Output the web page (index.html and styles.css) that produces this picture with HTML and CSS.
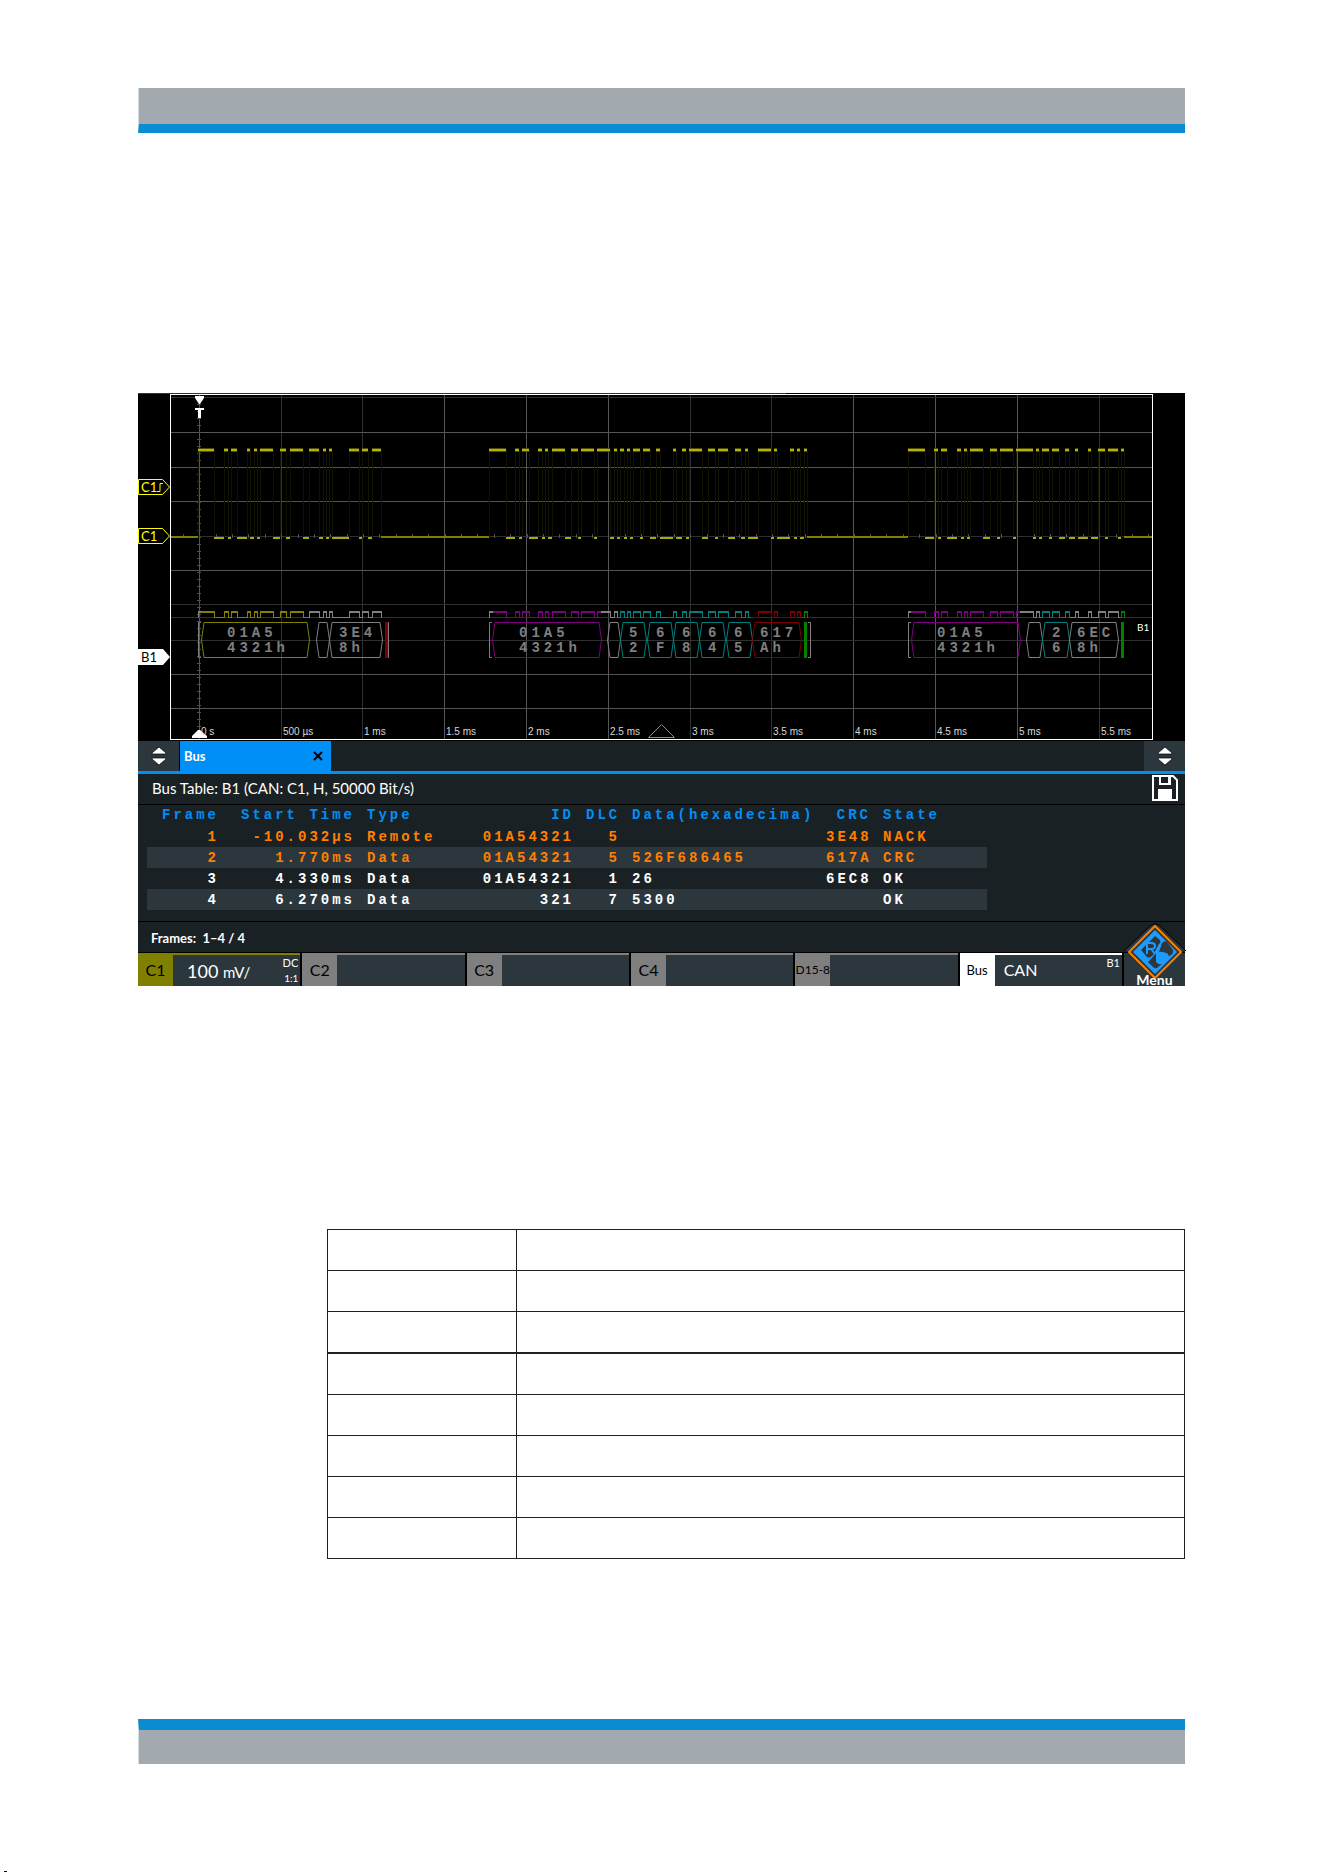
FILE: index.html
```html
<!DOCTYPE html>
<html lang="en">
<head>
<meta charset="utf-8">
<title>CAN bus table</title>
<link rel="stylesheet" href="styles.css">
</head>
<body>
<div class="page">
  <header class="band band-top"></header>

  <figure class="scope">
    <svg class="screen" viewBox="0 0 1047 348" role="img" aria-label="CAN waveform with decoded frames">
      <rect width="1047" height="348" fill="#000"/>
      <path d="M0 .5H648" stroke="#2b363d"/>
      <g id="grid" shape-rendering="crispEdges" fill="none"></g>
      <g id="signal" shape-rendering="crispEdges" fill="none"></g>
      <g id="bus" fill="none"></g>
      <rect x="32.500" y="1.500" width="982" height="345" fill="none" stroke="#fff"/>
      <path d="M57 3h9v2l-4 6h-1l-4-6zM57 15h9v2h-3v8h-3v-8h-3zM54 345v-2l6-6h2l7 6v2z" fill="#fff"/>
      <path d="M510.500 344.500h26l-13-13z" fill="none" stroke="#8c8c8c"/>
      <g class="ticks" id="labels"></g>
      <path d="M.5 86.500h24l7 7.500-7 7.500H.5zM.5 135.500h24l7 7.500-7 7.500H.5z" fill="#000" stroke="#ff0"/>
      <path d="M19 98.500h3v-8h3" fill="none" stroke="#ff0"/>
      <path d="M0 256h25l7 8-7 8H0z" fill="#fff"/>
      <g class="tag">
        <text x="3" y="99" fill="#ff0">C1</text>
        <text x="3" y="148" fill="#ff0">C1</text>
        <text x="3" y="269" fill="#000">B1</text>
      </g>
      <text class="bus-tag" x="999" y="238">B1</text>
    </svg>

    <div class="tabs">
      <button class="sort" type="button" aria-label="Resize left"><svg width="16" height="20" viewBox="0 0 16 20"><path d="M8 1l7 6v1H1V7zM1 12h14v1l-7 6-7-6z" fill="#fff" stroke="#000" stroke-width=".7"/></svg></button>
      <div class="tab">
        <button class="tab-name" type="button">Bus</button>
        <button class="tab-close" type="button" aria-label="Close"><svg width="10" height="10" viewBox="0 0 10 10"><path d="M1 1l8 8M9 1L1 9" stroke="#000" stroke-width="2"/></svg></button>
      </div>
      <button class="sort sort-end" type="button" aria-label="Resize right"><svg width="16" height="20" viewBox="0 0 16 20"><path d="M8 1l7 6v1H1V7zM1 12h14v1l-7 6-7-6z" fill="#fff" stroke="#000" stroke-width=".7"/></svg></button>
    </div>

    <div class="title-row">
      <span>Bus Table: B1 (CAN: C1, H, 50000 Bit/s)</span>
      <button class="save" type="button" aria-label="Save"><svg width="26" height="26" viewBox="0 0 26 26"><path d="M1 25V1h20l4 4v20z" fill="#1a2124" stroke="#fff" stroke-width="2"/><path d="M7 1h12v9H7zM6 14h14v12H6z" fill="#fff"/><path d="M9 2h7v6H9z" fill="#1a2124"/></svg></button>
    </div>

    <div class="frames">
      <table class="decode">
        <colgroup><col class="w-frame"><col class="w-start"><col class="w-type"><col class="w-id"><col class="w-dlc"><col class="w-data"><col class="w-crc"><col class="w-state"></colgroup>
        <thead>
          <tr><th class="num">Frame</th><th class="num">Start Time</th><th>Type</th><th class="num">ID</th><th class="num">DLC</th><th>Data(hexadecima)</th><th class="num">CRC</th><th>State</th></tr>
        </thead>
        <tbody>
          <tr class="error"><td class="num">1</td><td class="num">-10.032µs</td><td>Remote</td><td class="num">01A54321</td><td class="num">5</td><td></td><td class="num">3E48</td><td>NACK</td></tr>
          <tr class="error"><td class="num">2</td><td class="num">1.770ms</td><td>Data</td><td class="num">01A54321</td><td class="num">5</td><td>526F686465</td><td class="num">617A</td><td>CRC</td></tr>
          <tr><td class="num">3</td><td class="num">4.330ms</td><td>Data</td><td class="num">01A54321</td><td class="num">1</td><td>26</td><td class="num">6EC8</td><td>OK</td></tr>
          <tr><td class="num">4</td><td class="num">6.270ms</td><td>Data</td><td class="num">321</td><td class="num">7</td><td>5300</td><td class="num"></td><td>OK</td></tr>
        </tbody>
      </table>
    </div>

    <div class="count">Frames:&nbsp; 1–4 / 4</div>

    <div class="channels">
      <button class="channel c1" type="button"><span class="name">C1</span><span class="value"><span class="scale">100 <small>mV/</small></span><span class="side"><span>DC</span><small>1:1</small></span></span></button>
      <button class="channel" type="button"><span class="name">C2</span><span class="value"></span></button>
      <button class="channel" type="button"><span class="name">C3</span><span class="value"></span></button>
      <button class="channel" type="button"><span class="name">C4</span><span class="value"></span></button>
      <button class="channel digital" type="button"><span class="name">D15-8</span><span class="value"></span></button>
      <button class="channel decoder" type="button"><span class="name">Bus</span><span class="value"><span class="scale">CAN</span><span class="side"><span>B1</span></span></span></button>
      <button class="menu" type="button">
        <svg class="logo" width="62" height="56" viewBox="0 0 62 56">
          <path d="M0 28L26 3q5-4 10 0l26 25" fill="#2b363d" stroke="#000"/>
          <path d="M31 3l26 26-26 26L5 29z" fill="#2b363d" stroke="#ff8000" stroke-width="2"/>
          <path d="M31 7l22 22-22 22L9 29z" fill="#1e9bff"/>
          <path d="M17 27l14-14 4 3q3 3 0 5l-6 11q-4 4-6 2zM38 20q3-3 5-1l6 8q1 4-4 6l-2-3-8-1zM27 36l5-6v9l6 2-5 4q-2 1-4-1l-5-5z" fill="#2b363d"/>
          <path d="M23 31V20h4q4 0 4 3t-4 3h-4m4 0l4 5M41 31q-6-3-7 1t4 3 1 5q-3 1-6-1" fill="none" stroke="#1e9bff" stroke-width="2"/>
        </svg>
        <span class="menu-name">Menu</span>
      </button>
    </div>
  </figure>

  <table class="blank">
    <tbody>
      <tr><td></td><td></td></tr>
      <tr><td></td><td></td></tr>
      <tr><td></td><td></td></tr>
      <tr class="heavy"><td></td><td></td></tr>
      <tr><td></td><td></td></tr>
      <tr><td></td><td></td></tr>
      <tr><td></td><td></td></tr>
      <tr><td></td><td></td></tr>
    </tbody>
  </table>

  <footer class="band band-bottom"></footer>
</div>
<div class="crop-mark"></div>
<script src="scope.js"></script>
</body>
</html>
```
FILE: styles.css
```css
* { box-sizing: border-box; }
body { margin: 0; background: #fff; font-family: Lato, "Liberation Sans", sans-serif; }
button { margin: 0; padding: 0; border: 0; background: none; color: inherit; font: inherit; }

.page { padding: 88px 139px 107px 138px; }
.band { height: 45px; background: #a2a9af; border-left: 1px solid #d5dbde; }
.band-top { border-bottom: 9px solid #0a8cd2; }
.band-bottom { border-top: 11px solid #0a8cd2; }

/* Oscilloscope display */
.scope { margin: 260px 0 243px; background: #1a2124; color: #fff; }
.screen { display: block; width: 100%; height: auto; }
.ticks { font: 10px "Liberation Sans", sans-serif; fill: #d8d8d8; }
.tag { font-size: 13px; }
.bus-tag { font-size: 10px; fill: #fff; }
.hex { font: bold 14px "Liberation Mono", monospace; letter-spacing: 4px; fill: #7f7f7f; }

.tabs { display: flex; height: 33px; border-bottom: 3px solid #008ff7; }
.sort { display: flex; align-items: center; justify-content: center; width: 42px; background: #2b363d; border-right: 1px solid #000; }
.sort-end { margin-left: auto; width: 41px; border-right: 0; }
.tab { display: flex; align-items: center; justify-content: space-between; width: 151px; padding: 0 8px 0 4px; background: #008ff7; }
.tab-name { font-size: 13px; font-weight: bold; }
.tab-close svg { display: block; }

.title-row { display: flex; align-items: center; justify-content: space-between; height: 31px; padding: 0 7px 2px 14px; border-bottom: 1px solid #000; font-size: 15px; }
.save svg { display: block; }

.frames { padding: 0 9px 11px; border-bottom: 1px solid #000; }
.decode { table-layout: fixed; width: 840px; max-width: 100%; border-collapse: collapse; font: bold 14px "Liberation Mono", monospace; letter-spacing: 3px; }
.decode tr { height: 21px; }
.decode th, .decode td { padding: 1px 6px 0; text-align: left; white-space: nowrap; line-height: 20px; }
.decode th { padding: 0 6px 1px; color: #008ff7; }
.decode .num { text-align: right; }
.decode tbody tr:nth-child(even) { background: #2b363d; }
.decode .error { color: #ff8000; }
.w-frame { width: 78px; }
.w-start { width: 136px; }
.w-type { width: 110px; }
.w-id { width: 109px; }
.w-dlc { width: 46px; }
.w-data { width: 194px; }
.w-crc { width: 57px; }
.w-state { width: 110px; }

.count { height: 31px; padding-left: 13px; border-bottom: 1px solid #000; font: bold 13px/32px Lato, sans-serif; }

.channels { display: grid; grid-template-columns: repeat(6, 1fr) 61px; grid-template-rows: 33px; column-gap: 2px; background: #000; }
.channel { display: flex; align-items: stretch; min-width: 0; border-top: 2px solid #7f7f7f; background: #2b363d; text-align: left; white-space: nowrap; }
.name { display: flex; align-items: center; justify-content: center; flex: none; width: 35px; padding-bottom: 2px; background: #7f7f7f; color: #000; font-size: 16px; }
.value { display: flex; flex: 1; justify-content: space-between; padding: 0 2px 0 14px; }
.scale { align-self: center; font-size: 18px; }
.scale small { font-size: 15px; }
.side { display: flex; flex-direction: column; justify-content: space-between; align-items: flex-end; font-size: 11px; line-height: 15px; }
.side small { font-size: 10px; }
.c1 { border-color: #7f7f00; }
.c1 .name { background: #7f7f00; }
.digital .name { font-size: 12px; }
.decoder { border-color: #fff; }
.decoder .name { background: #fff; font-size: 13px; }
.decoder .value { padding-left: 9px; }
.decoder .scale { padding-bottom: 2px; font-size: 16px; }
.menu { position: relative; background: #2b363d; }
.logo { position: absolute; left: 0; bottom: 7px; }
.menu-name { position: absolute; left: 0; right: 0; bottom: 0; font-size: 14px; font-weight: bold; line-height: 13px; }

/* Ruled table */
.blank { width: 858px; max-width: 100%; margin: 0 0 160px auto; border-collapse: collapse; table-layout: fixed; }
.blank td { height: 41px; padding: 0; border: 1px solid #231f20; }
.blank td:first-child { width: 189px; }
.blank .heavy td { height: 42px; border-top-width: 2px; }

.crop-mark { width: 3px; height: 1px; margin-left: 4px; background: #000080; }
```
FILE: scope.js
```js
const NS = "http://www.w3.org/2000/svg";
const layer = id => document.getElementById(id);

function add(parent, tag, attrs, text) {
  const node = document.createElementNS(NS, tag);
  for (const key in attrs) node.setAttribute(key, attrs[key]);
  if (text) node.textContent = text;
  parent.appendChild(node);
}
const stroke = (parent, d, color, width = 1) => add(parent, "path", { d, stroke: color, "stroke-width": width });

const GRAY = "#7f7f7f", OLIVE = "#7f7f00", PURPLE = "#7f007f", TEAL = "#007f7f", RED = "#7f0000", GREEN = "#007f00";

/* Graticule */
const columns = [61, 143, 224, 306, 388, 470, 552, 633, 715, 797, 879, 961];
const dimColumns = [143, 224, 552, 633, 961];
const times = ["0 s", "500 µs", "1 ms", "1.5 ms", "2 ms", "2.5 ms", "3 ms", "3.5 ms", "4 ms", "4.5 ms", "5 ms", "5.5 ms"];
columns.forEach((x, i) => {
  stroke(layer("grid"), `M${x}.5 2V346`, dimColumns.includes(x) ? "#303030" : "#555");
  add(layer("labels"), "text", { x: x + 2, y: 342 }, times[i]);
});
[4, 39, 74, 108, 143, 177, 211, 224, 247, 281, 315].forEach(y =>
  stroke(layer("grid"), `M33 ${y}.5H1014`, [4, 143, 211, 224, 247].includes(y) ? "#303030" : "#555"));
let marks = "";
for (let y = 11; y < 340; y += 7) marks += `M59 ${y}.5h4`;
for (let i = 0; i < 60; i++) marks += `M${Math.round(45 + i * 16.36)}.5 141v4`;
stroke(layer("grid"), marks, "#505050");

/* Each burst lists the spans in which the line is high */
const bursts = [
  { high: [60,76,86,90,93,99,109,112,116,119,122,135,142,148,152,165,171,181,185,188,191,194,211,221,224,230,234,243],
    zones: [[60,63,GRAY],[63,171,OLIVE],[171,244,GRAY]] },
  { high: [351,368,377,381,384,391,400,404,407,410,414,427,433,440,443,456,459,472,476,479,482,486,489,492,495,502,505,512,518,522,535,538,544,548,551,564,570,577,580,590,597,603,607,610,620,633,636,639,652,656,659,662,666,669],
    zones: [[351,355,GRAY],[355,463,PURPLE],[463,480,GRAY],[480,613,TEAL],[613,664,RED],[664,670,GREEN]] },
  { high: [770,787,796,800,803,809,819,823,826,829,832,845,852,859,862,875,878,895,898,901,904,911,914,921,927,931,937,940,950,953,960,967,970,980,983,986],
    zones: [[770,773,GRAY],[773,882,PURPLE],[882,903,GRAY],[903,932,TEAL],[932,982,GRAY],[982,987,GREEN]] }
];

let highs = "", lows = "", edges = "", idle = "", from = 33;
bursts.forEach(({ high, zones }) => {
  idle += `M${from} 144H${high[0]}`;
  from = high[high.length - 1];
  high.forEach((x, i) => {
    edges += `M${x}.5 57V145`;
    if (i % 2 === 0) highs += `M${x} 57H${high[i + 1]}`;
    else if (i < high.length - 1) lows += `M${x} 145H${high[i + 1]}`;
  });
  zones.forEach(([a, b, color]) => {
    let top = "", low = "", side = "";
    high.forEach((x, i) => {
      const next = high[i + 1] ?? x;
      const s = Math.max(a, x), e = Math.min(b, next);
      if (s < e) i % 2 === 0 ? top += `M${s} 219H${e}` : low += `M${s} 224.500H${e}`;
      if (x >= a && x < b) side += `M${x}.5 218V225`;
    });
    stroke(layer("bus"), low + side, color);
    stroke(layer("bus"), top, color, 2);
  });
});
idle += `M${from} 144H1014`;
stroke(layer("signal"), edges, "#121200");
stroke(layer("signal"), idle, "#7f7f00", 2);
stroke(layer("signal"), highs, "#4c4c00", 4);
stroke(layer("signal"), highs, "#b4b400", 2);
stroke(layer("signal"), lows, "#aaaa00", 2);

/* Decoded fields: left, right, colour, text column, upper line, lower line */
[
  [63,171,OLIVE,89,"01A5","4321h"], [178,191,GRAY], [191,244,GRAY,201,"3E4","8h"],
  [354,463,PURPLE,381,"01A5","4321h"], [469,482,GRAY],
  [482,508,TEAL,491,"5","2"], [509,535,TEAL,518,"6","F"], [535,561,TEAL,544,"6","8"],
  [561,587,TEAL,570,"6","4"], [588,614,TEAL,596,"6","5"], [614,663,RED,622,"617","Ah"],
  [773,882,PURPLE,799,"01A5","4321h"], [888,904,GRAY],
  [904,931,TEAL,914,"2","6"], [931,980,GRAY,939,"6EC","8h"]
].forEach(([l, r, color, x, upper, lower]) => {
  const bus = layer("bus");
  stroke(bus, `M${l + 3} 229.500L${l}.5 247L${l + 3} 264.500H${r - 2}L${r}.5 247L${r - 2} 229.500z`, color);
  if (upper) {
    add(bus, "text", { class: "hex", x, y: 244 }, upper);
    add(bus, "text", { class: "hex", x, y: 259 }, lower);
  }
});
stroke(layer("bus"), "M63 229.500H60.500V264.500H63M354 229.500H351.500V264.500H354M773 229.500H770.500V264.500H773M247 229.500H250.500V264.500H247M670 229.500H672.500V264.500H670", GRAY);
stroke(layer("bus"), "M248.500 229V265", RED, 3);
stroke(layer("bus"), "M667.500 229V265M984.500 229V265", GREEN, 3);
```
